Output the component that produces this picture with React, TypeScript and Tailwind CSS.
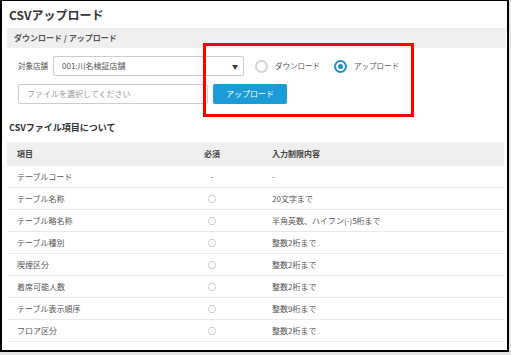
import React from 'react';

const rows: [string, string, string][] = [
  ['テーブルコード', '-', '-'],
  ['テーブル名称', '○', '20文字まで'],
  ['テーブル略名称', '○', '半角英数、ハイフン(-)5桁まで'],
  ['テーブル種別', '○', '整数2桁まで'],
  ['喫煙区分', '○', '整数2桁まで'],
  ['着席可能人数', '○', '整数2桁まで'],
  ['テーブル表示順序', '○', '整数9桁まで'],
  ['フロア区分', '○', '整数2桁まで'],
];

const font = { fontFamily: '"Noto Sans CJK JP", "Noto Sans", sans-serif' };

function Radio({ label, checked }: { label: string; checked?: boolean }) {
  return (
    <label className="flex items-center gap-[7px]">
      {checked ? (
        <span className="flex h-[13px] w-[13px] items-center justify-center rounded-full border-2 border-[#1b8fd6] bg-white">
          <span className="h-[5px] w-[5px] rounded-full bg-[#1b8fd6]" />
        </span>
      ) : (
        <span className="h-[13px] w-[13px] rounded-full border-2 border-[#d4d4d4] bg-white" />
      )}
      <span className="text-[7.5px] text-[#555]">{label}</span>
    </label>
  );
}

export default function App() {
  return (
    <div className="h-[355px] w-[511px] bg-[#e4e4e4]" style={font}>
      <div className="relative h-[352px] w-[509px] border-t border-r-2 border-b-2 border-l-2 border-black bg-white pl-[5px] pr-[1px]">
        <h1 className="flex h-[27px] items-center pl-[2px] text-[12px] font-bold text-[#333]">CSVアップロード</h1>

        <div className="flex h-[20px] items-center bg-[#efefef] pl-[7px] text-[8px] font-bold text-[#555]">
          ダウンロード / アップロード
        </div>

        <div className="flex flex-col gap-[8px] pl-[11px] pt-[8px]">
          <div className="flex items-center">
            <span className="mr-[5px] text-[7.5px] text-[#555]">対象店舗</span>
            <div className="flex h-[20px] w-[191px] items-center justify-between rounded-[2px] border border-[#ccc] bg-white pl-[8px] pr-[5px]">
              <span className="text-[8px] text-[#555]">001:川名検証店舗</span>
              <span className="text-[6px] text-[#333]">▼</span>
            </div>
            <div className="ml-[11px] flex items-center gap-[14px]">
              <Radio label="ダウンロード" />
              <Radio label="アップロード" checked />
            </div>
          </div>
          <div className="flex items-center gap-[5px]">
            <div className="flex h-[20px] w-[190px] items-center rounded-[2px] border border-[#ccc] bg-white pl-[8px]">
              <span className="text-[8px] text-[#999]">ファイルを選択してください</span>
            </div>
            <button className="h-[20px] w-[74px] rounded-[2px] bg-[#1b9bd7] text-[8px] text-white">アップロード</button>
          </div>
        </div>

        <h2 className="mt-[6px] flex h-[24px] items-end pl-[2px] pt-[13px] text-[9px] font-bold text-[#333]">CSVファイル項目について</h2>

        <div className="mr-[2px] mt-[8px] text-[8px] text-[#555]">
          <div className="grid h-[24px] grid-cols-[168px_74px_1fr] items-center bg-[#efefef] font-bold text-[#444]">
            <span className="pl-[10px]">項目</span>
            <span className="text-center">必須</span>
            <span className="pl-[23px]">入力制限内容</span>
          </div>
          {rows.map(([name, req, rule]) => (
            <div key={name} className="grid h-[22px] grid-cols-[168px_74px_1fr] items-center border-b border-[#e8e8e8]">
              <span className="pl-[10px]">{name}</span>
              <span className="text-center">{req}</span>
              <span className="pl-[23px]">{rule}</span>
            </div>
          ))}
        </div>

        <div className="absolute left-[201px] top-[42px] h-[74px] w-[211px] border-[3px] border-[#ff0000]" />
      </div>
    </div>
  );
}
